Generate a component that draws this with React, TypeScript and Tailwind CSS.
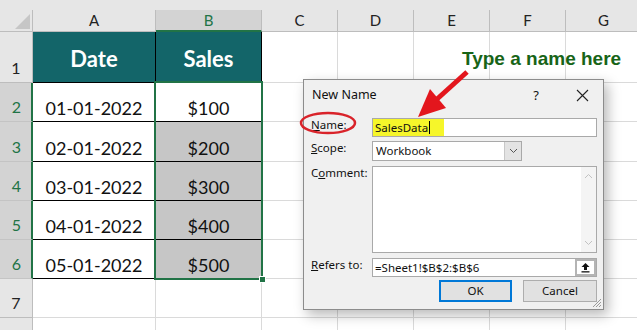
import React from 'react';

const blankCols = ['C', 'D', 'E', 'F', 'G'];

const rows = [
  { n: 2, date: '01-01-2022', sales: '$100' },
  { n: 3, date: '02-01-2022', sales: '$200' },
  { n: 4, date: '03-01-2022', sales: '$300' },
  { n: 5, date: '04-01-2022', sales: '$400' },
  { n: 6, date: '05-01-2022', sales: '$500' },
];

const Blank: React.FC = () => <div className="border-r border-b border-[#dadada] bg-white" />;

const RowHead: React.FC<{ n?: number; active?: boolean }> = ({ n, active }) =>
  active ? (
    <div className="flex items-end justify-center border-b border-r-2 border-b-[#c4c4c4] border-r-[#217346] bg-[#d3d3d3] pb-[4px] pl-[2px] text-[16px] leading-[20px] text-[#217346]">
      {n}
    </div>
  ) : (
    <div className="flex items-end justify-center border-r border-b border-[#bdbdbd] bg-[#e6e6e6] pb-[4px] text-[16px] leading-[20px] text-[#222]">
      {n}
    </div>
  );

const Dialog: React.FC = () => (
  <div className="absolute left-[303px] top-[79px] flex h-[231px] w-[301px] flex-col border border-[#8c8c8c] bg-[#f0f0f0] font-['Noto_Sans',sans-serif] text-[11.5px] text-[#111] shadow-[4px_5px_12px_rgba(0,0,0,0.28)]">
    <div className="flex h-[31px] items-center pl-[8px] pr-[9px]">
      <span className="flex-1 text-[12.5px]">New Name</span>
      <span className="w-[24px] text-center text-[13px]">?</span>
      <span className="ml-[22px] flex w-[24px] justify-center">
        <svg width="13" height="13" viewBox="0 0 13 13">
          <path d="M1 1 L12 12 M12 1 L1 12" stroke="#222" strokeWidth="1.1" />
        </svg>
      </span>
    </div>

    <div className="flex flex-col pl-[7px] pr-[6px]">
      <div className="mt-[7px] flex h-[19px] items-start">
        <span className="w-[61px] leading-[14px]">
          <span className="underline">N</span>ame:
        </span>
        <div className="flex h-[19px] flex-1 items-stretch border border-[#a9a9a9] bg-white">
          <span className="flex w-[71px] items-center bg-[#f6f62a] pl-[2px]">
            SalesData
            <span className="ml-[1px] h-[13px] w-[1px] bg-black" />
          </span>
        </div>
      </div>

      <div className="mt-[4px] flex h-[20px] items-start">
        <span className="w-[61px] leading-[14px]">
          <span className="underline">S</span>cope:
        </span>
        <div className="flex h-[20px] w-[150px] items-stretch border border-[#a9a9a9] bg-white">
          <span className="flex flex-1 items-center pl-[3px]">Workbook</span>
          <span className="flex w-[17px] items-center justify-center border-l border-[#c8c8c8] bg-[#e3e3e3]">
            <svg width="9" height="6" viewBox="0 0 9 6">
              <path d="M1 1 L4.5 4.5 L8 1" stroke="#555" strokeWidth="1" fill="none" />
            </svg>
          </span>
        </div>
      </div>

      <div className="mt-[5px] flex h-[87px] items-start">
        <span className="w-[61px] leading-[14px]">
          C<span className="underline">o</span>mment:
        </span>
        <div className="flex h-[87px] flex-1 border border-[#a9a9a9] bg-white">
          <div className="flex-1" />
          <div className="flex w-[15px] flex-col items-center justify-between bg-[#f4f4f4] py-[6px]">
            <svg width="9" height="6" viewBox="0 0 9 6">
              <path d="M1 5 L4.5 1.5 L8 5" stroke="#c2c2c2" strokeWidth="1" fill="none" />
            </svg>
            <svg width="9" height="6" viewBox="0 0 9 6">
              <path d="M1 1 L4.5 4.5 L8 1" stroke="#c2c2c2" strokeWidth="1" fill="none" />
            </svg>
          </div>
        </div>
      </div>

      <div className="mt-[5px] flex h-[19px] items-start">
        <span className="w-[61px] leading-[14px]">
          <span className="underline">R</span>efers to:
        </span>
        <div className="flex h-[19px] flex-1 items-stretch border border-[#a9a9a9] bg-white">
          <span className="flex flex-1 items-center pl-[2px]">=Sheet1!$B$2:$B$6</span>
          <span className="flex w-[21px] items-center justify-center border-2 border-[#b4b4b4] bg-white">
            <svg width="11" height="11" viewBox="0 0 11 11">
              <path d="M5.5 1 L9.5 5 L7 5 L7 8 L4 8 L4 5 L1.5 5 Z" fill="#111" />
              <rect x="1.5" y="9.2" width="8" height="1.3" fill="#111" />
            </svg>
          </span>
        </div>
      </div>

      <div className="mt-[3px] flex justify-end gap-[11px]">
        <button className="flex h-[22px] w-[73px] items-center justify-center border-2 border-[#0078d7] bg-[#e1e1e1]">
          OK
        </button>
        <button className="flex h-[22px] w-[74px] items-center justify-center border border-[#adadad] bg-[#e1e1e1]">
          Cancel
        </button>
      </div>
    </div>

    <svg className="absolute bottom-[1px] right-[1px]" width="11" height="11" viewBox="0 0 11 11">
      <path d="M10 2 L2 10 M10 5 L5 10 M10 8 L8 10" stroke="#9a9a9a" strokeWidth="1" />
    </svg>
  </div>
);

export default function App() {
  return (
    <div className="relative h-[330px] w-[637px] overflow-hidden bg-white font-['Lato',sans-serif]">
      <div className="h-[10px] bg-[#e6e6e6]" />
      <div className="grid grid-cols-[33px_123px_106px_76px_76px_76px_76px_76px] grid-rows-[22px_51px_39px_40px_39px_39px_39px_39px_39px]">
        {/* column headers */}
        <div className="flex items-end justify-end border-r border-b border-[#bdbdbd] bg-[#e6e6e6] pr-[2px] pb-[2px]">
          <svg width="15" height="15" viewBox="0 0 15 15">
            <polygon points="15,0 15,15 0,15" fill="#c6c6c6" />
          </svg>
        </div>
        <div className="flex items-center justify-center border-r border-b border-[#bdbdbd] bg-[#e6e6e6] text-[15px] text-[#222]">A</div>
        <div className="flex items-center justify-center border-r border-b-2 border-r-[#bdbdbd] border-b-[#217346] bg-[#d3d3d3] text-[15px] text-[#217346]">B</div>
        {blankCols.map((c) => (
          <div key={c} className="flex items-center justify-center border-r border-b border-[#bdbdbd] bg-[#e6e6e6] text-[15px] text-[#222]">
            {c}
          </div>
        ))}

        {/* row 1 */}
        <RowHead n={1} />
        <div className="flex items-center justify-center border-r border-b border-black bg-[#136569] pt-[3px] text-[22px] font-bold text-white">Date</div>
        <div className="flex items-center justify-center border-r border-b border-black bg-[#136569] pt-[3px] text-[22px] font-bold text-white">Sales</div>
        {blankCols.map((c) => <Blank key={c} />)}

        {/* rows 2-6 */}
        {rows.map((r) => (
          <React.Fragment key={r.n}>
            <RowHead n={r.n} active />
            <div className="flex items-end justify-center border-r border-b border-black bg-white pb-[2px] text-[18px] leading-[22px] text-[#111]">
              {r.date}
            </div>
            <div
              className={
                r.n === 2
                  ? 'flex items-end justify-center border-r border-b border-black bg-white pb-[2px] text-[18px] leading-[22px] text-[#111]'
                  : 'flex items-end justify-center border-r border-b border-black bg-[#c6c6c6] pb-[2px] text-[18px] leading-[22px] text-[#111]'
              }
            >
              {r.sales}
            </div>
            {blankCols.map((c) => <Blank key={c} />)}
          </React.Fragment>
        ))}

        {/* row 7, and the top of row 8 */}
        <RowHead n={7} />
        <Blank />
        <Blank />
        {blankCols.map((c) => <Blank key={c} />)}
        <RowHead />
        <Blank />
        <Blank />
        {blankCols.map((c) => <Blank key={c} />)}
      </div>

      {/* selection around B2:B6 */}
      <div className="absolute left-[154px] top-[81px] h-[199px] w-[109px] border-2 border-[#217346]" />
      <div className="absolute left-[259px] top-[276px] h-[7px] w-[7px] border border-white bg-[#217346]" />

      <Dialog />

      <div className="absolute left-[462px] top-[47px] font-['Liberation_Sans',Arial,sans-serif] text-[19px] font-bold leading-[24px] text-[#176417]">
        Type a name here
      </div>

      <svg className="pointer-events-none absolute left-0 top-0" width="637" height="330" viewBox="0 0 637 330">
        <ellipse cx="328" cy="123" rx="27" ry="10" fill="none" stroke="#d9232a" strokeWidth="2.5" />
        <line x1="467" y1="72" x2="436" y2="100" stroke="#e3161d" strokeWidth="5" />
        <polygon points="418,117 446,108 430,89" fill="#e3161d" />
      </svg>
    </div>
  );
}
